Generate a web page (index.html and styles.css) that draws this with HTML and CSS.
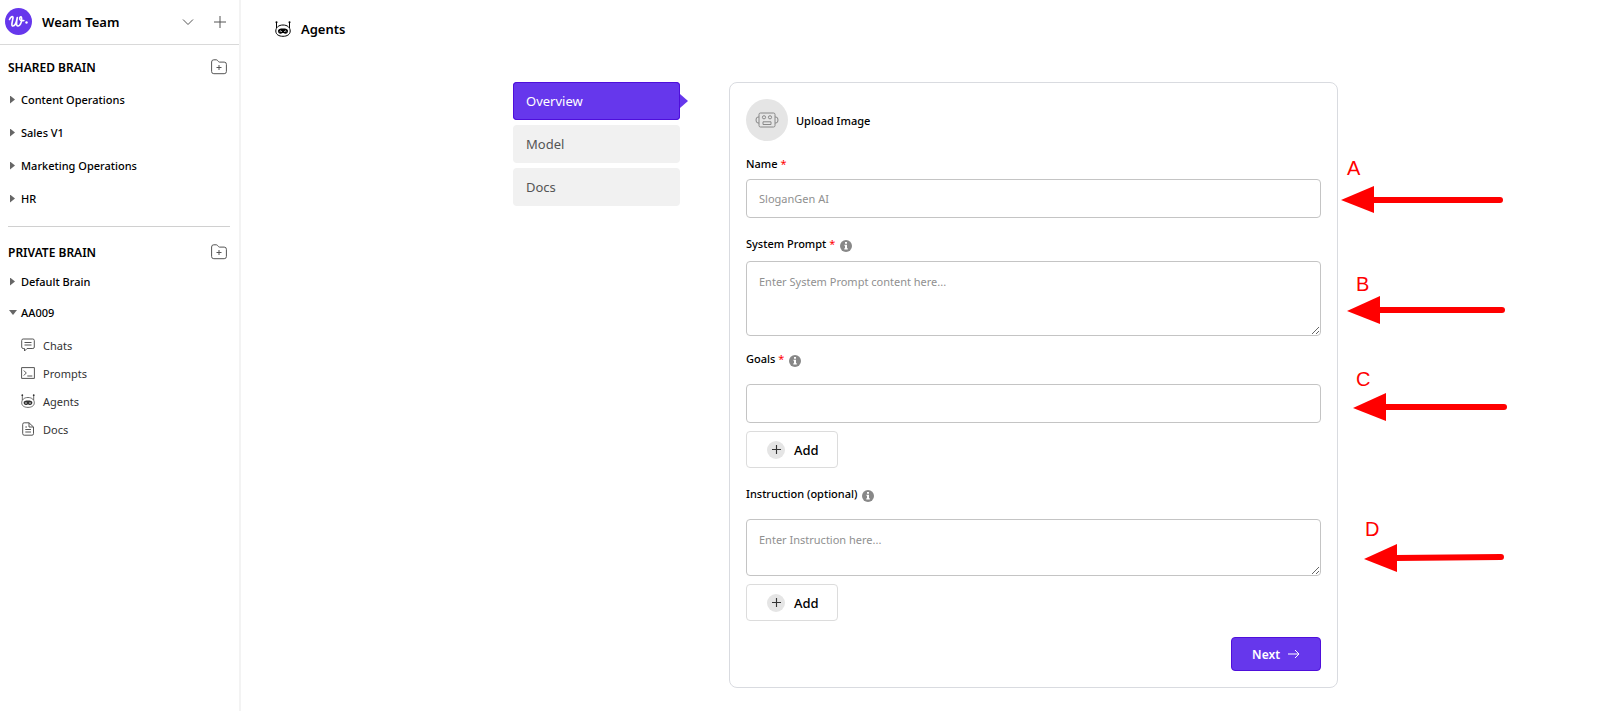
FILE: index.html
```html
<!DOCTYPE html>
<html lang="en">
<head>
    <meta charset="UTF-8">
    <title>Agents</title>
    <link rel="stylesheet" href="styles.css">
</head>
<body>
<!-- shared icons -->
<svg class="sprite" aria-hidden="true">
    <symbol id="folder" viewBox="0 0 16 16">
        <path d="M.6 12.500V3A2.200 2.200 0 0 1 2.800.8h2.500c.6 0 1 .3 1.400.8l.7.9c.3.4.7.6 1.100.6H13.200a2.200 2.200 0 0 1 2.200 2.200v7.200a2.200 2.200 0 0 1-2.200 2.200H2.800a2.200 2.200 0 0 1-2.200-2.200zM8 6v5M5.500 8.500h5"/>
    </symbol>
    <symbol id="agent" viewBox="0 0 16 16">
        <path d="M1.500 1v6M14.500 1v6M.8 10C.8 6.500 3.600 4 8 4s7.200 2.500 7.200 6-3 5.300-7.200 5.300S.8 13.500.8 10z"/>
        <circle class="solid" cx="1.500" cy="1.300" r="1"/>
        <circle class="solid" cx="14.500" cy="1.300" r="1"/>
        <path class="solid" d="M3 9.800C3 8 5.200 7.500 8 7.500s5 .5 5 2.300-1 2.900-2.500 2.900S8.800 12 8 12s-1 .7-2.500.7S3 11.600 3 9.800z"/>
        <path class="eyes" d="M4.700 10.600q1-1.300 2 0M9.300 10.600q1-1.300 2 0"/>
    </symbol>
    <symbol id="info" viewBox="0 0 12 12">
        <circle cx="6" cy="6" r="6"/>
        <path d="M5 2h2v1.700H5zM4.400 4.700H7v3.600h.8v1.100H4.300V8.300H5V5.800h-.6z" fill="#fff"/>
    </symbol>
    <symbol id="plus" viewBox="0 0 12 12">
        <path d="M6 0v12M0 6h12"/>
    </symbol>
</svg>

<div class="app">
    <aside class="sidebar">
        <div class="team">
            <svg class="logo" viewBox="0 0 27 27">
                <circle cx="13.500" cy="13.500" r="13.500" fill="#6637ec"/>
                <path d="M4.500 11.500C5.500 9 8 7.500 8 9.500c0 2.500-2.500 8.500 0 8.500 2.200 0 3.500-4 4.300-8.500-.8 4-1.400 8.500.6 8.500 2.600 0 4.600-6 3.600-8.500-.7-1.500-2.300-.2-1.700 1.800.5 1.400 2.200 1.700 4 1.200" fill="none" stroke="#fff" stroke-width="1.600" stroke-linecap="round" stroke-linejoin="round"/>
                <circle cx="21.500" cy="14.500" r="1.200" fill="#fff"/>
            </svg>
            <span class="team-name">Weam Team</span>
            <button class="icon-btn" aria-label="Switch team"><svg class="line" width="12" height="12" viewBox="0 0 12 12"><path d="M1 3.500l5 5 5-5"/></svg></button>
            <button class="icon-btn" aria-label="New chat"><svg class="line" width="12" height="12"><use href="#plus"/></svg></button>
        </div>

        <section class="brain shared">
            <div class="brain-head">
                <h2>SHARED BRAIN</h2>
                <button class="icon-btn" aria-label="Add shared brain"><svg class="line" width="16" height="16"><use href="#folder"/></svg></button>
            </div>
            <ul class="tree">
                <li><a href="#"><i class="caret"></i>Content Operations</a></li>
                <li><a href="#"><i class="caret"></i>Sales V1</a></li>
                <li><a href="#"><i class="caret"></i>Marketing Operations</a></li>
                <li><a href="#"><i class="caret"></i>HR</a></li>
            </ul>
        </section>

        <section class="brain private">
            <div class="brain-head">
                <h2>PRIVATE BRAIN</h2>
                <button class="icon-btn" aria-label="Add private brain"><svg class="line" width="16" height="16"><use href="#folder"/></svg></button>
            </div>
            <ul class="tree">
                <li><a href="#"><i class="caret"></i>Default Brain</a></li>
                <li><a href="#"><i class="caret open"></i>AA009</a></li>
            </ul>
            <ul class="pages">
                <li><a href="#"><svg class="line" width="14" height="14" viewBox="0 0 14 14"><path d="M2.200 1h9.600A1.500 1.500 0 0 1 13.300 2.500v6.500a1.500 1.500 0 0 1-1.500 1.500H6L3.500 13v-2.500H2.200A1.500 1.500 0 0 1 .7 9V2.500A1.500 1.500 0 0 1 2.200 1zM3.500 4.500h7M3.500 7h7"/></svg>Chats</a></li>
                <li><a href="#"><svg class="line" width="14" height="14" viewBox="0 0 14 14"><path d="M.6 1.600h12.800v10.800H.6zM2.800 4.500L5.300 7 2.800 9.500M6.300 10h5"/></svg>Prompts</a></li>
                <li><a href="#"><svg class="line" width="14" height="14"><use href="#agent"/></svg>Agents</a></li>
                <li><a href="#"><svg class="line" width="14" height="14" viewBox="0 0 14 14"><path d="M3.200.8H8L12.500 5v6.700a1.500 1.500 0 0 1-1.500 1.500H3.200A1.500 1.500 0 0 1 1.700 11.700V2.300A1.500 1.500 0 0 1 3.200.8zM8 .8V5h4.500M4.300 7.500H10M4.300 10H10M4.300 5H6"/></svg>Docs</a></li>
            </ul>
        </section>
    </aside>

    <main class="main">
        <header class="page-head">
            <svg class="line" width="16" height="16"><use href="#agent"/></svg>
            <h1>Agents</h1>
        </header>

        <div class="layout">
            <nav class="tabs">
                <a class="active" href="#">Overview</a>
                <a href="#">Model</a>
                <a href="#">Docs</a>
            </nav>

            <form class="card">
                <button type="button" class="upload">
                    <span class="avatar">
                        <svg class="line" width="24" height="16" viewBox="0 0 24 16"><path d="M5.500 1h13A1.500 1.500 0 0 1 20 2.500v11a1.500 1.500 0 0 1-1.500 1.500h-13A1.500 1.500 0 0 1 4 13.500v-11A1.500 1.500 0 0 1 5.500 1zM4 5H3Q1 5 1 8t2 3h1M20 5h1q2 0 2 3t-2 3h-1M8 9.800h8v2.700H8z"/><circle cx="9" cy="5.300" r="1.600"/><circle cx="15" cy="5.300" r="1.600"/></svg>
                    </span>
                    Upload Image
                </button>

                <div class="field">
                    <label for="name">Name <b>*</b></label>
                    <input id="name" type="text" placeholder="SloganGen AI">
                </div>

                <div class="field long">
                    <label for="prompt">System Prompt <b>*</b> <svg class="info"><use href="#info"/></svg></label>
                    <textarea id="prompt" class="tall" placeholder="Enter System Prompt content here..."></textarea>
                </div>

                <div class="field spaced">
                    <label for="goals">Goals <b>*</b> <svg class="info"><use href="#info"/></svg></label>
                    <input id="goals" type="text">
                    <button type="button" class="add"><span><svg class="line" width="9" height="9"><use href="#plus"/></svg></span>Add</button>
                </div>

                <div class="field long spaced">
                    <label for="instruction">Instruction (optional) <svg class="info"><use href="#info"/></svg></label>
                    <textarea id="instruction" placeholder="Enter Instruction here..."></textarea>
                    <button type="button" class="add"><span><svg class="line" width="9" height="9"><use href="#plus"/></svg></span>Add</button>
                </div>

                <button type="button" class="next">Next <svg width="12" height="10" viewBox="0 0 12 10"><path d="M0 5h11M7 1l4 4-4 4"/></svg></button>

                <!-- callouts beside the form -->
                <svg class="callouts" width="180" height="500" viewBox="0 0 180 500">
                    <text x="10" y="92">A</text>
                    <path class="head" d="M4 117l33-14v27z"/>
                    <path d="M35 117h128"/>
                    <text x="19" y="208">B</text>
                    <path class="head" d="M10 228l33-15v28z"/>
                    <path d="M41 227h124"/>
                    <text x="19" y="303">C</text>
                    <path class="head" d="M16 325l33-15v28z"/>
                    <path d="M47 324h120"/>
                    <text x="28" y="453">D</text>
                    <path class="head" d="M27 476l33-15v28z"/>
                    <path d="M58 475l106-1"/>
                </svg>
            </form>
        </div>
    </main>
</div>
</body>
</html>
```
FILE: styles.css
```css
* {
    margin: 0;
    padding: 0;
    box-sizing: border-box;
}

body {
    font-family: "Noto Sans", "Open Sans", sans-serif;
    font-size: 11px;
    color: #000;
    background: #fff;
}

ul {
    list-style: none;
}

a {
    color: inherit;
    text-decoration: none;
}

button {
    font: inherit;
    color: inherit;
    background: none;
    border: 0;
    cursor: pointer;
}

.sprite {
    display: none;
}

.line {
    fill: none;
    stroke: #555;
    flex: none;
}

.solid {
    fill: currentColor;
    stroke: none;
}

.eyes {
    stroke: #fff;
}

.app {
    display: flex;
    min-height: 100vh;
}

/* sidebar */
.sidebar {
    width: 241px;
    flex: none;
    border-right: 2px solid #f3f3f3;
}

.team {
    display: flex;
    align-items: center;
    height: 45px;
    padding: 0 13px 1px 5px;
    border-bottom: 1px solid #d9d9d9;
}

.logo {
    width: 27px;
    height: 27px;
    margin-right: 10px;
}

.team-name {
    flex: 1;
    font-size: 13px;
    font-weight: 600;
}

.icon-btn {
    display: flex;
}

.team .icon-btn {
    margin-left: 20px;
}

.brain-head {
    display: flex;
    align-items: center;
    justify-content: space-between;
    height: 24px;
    padding: 0 12px 0 8px;
}

h2 {
    font-size: 12px;
    font-weight: 600;
}

.shared {
    padding: 10px 0 8px;
}

.private {
    padding-top: 13px;
}

.private::before {
    content: "";
    display: block;
    margin: -13px 9px 13px 8px;
    border-top: 1px solid #d0d0d0;
}

.tree a {
    display: flex;
    align-items: center;
    height: 33px;
    padding-left: 10px;
    font-weight: 500;
}

.shared .tree {
    padding: 4px 0 3px;
}

.private .tree {
    padding: 2px 0 3px;
}

.private .tree a {
    height: 31px;
}

.caret {
    width: 11px;
    flex: none;
}

.caret::before {
    content: "";
    display: block;
    width: 5px;
    height: 8px;
    background: #666;
    clip-path: polygon(0 0, 100% 50%, 0 100%);
}

.caret.open::before {
    width: 8px;
    height: 5px;
    margin-left: -1px;
    clip-path: polygon(0 0, 100% 0, 50% 100%);
}

.pages a {
    display: flex;
    align-items: center;
    gap: 8px;
    height: 28px;
    padding-left: 21px;
    color: #333;
}

/* main area */
.main {
    flex: 1;
    padding: 0 24px 0 34px;
}

.page-head {
    display: flex;
    align-items: center;
    gap: 10px;
    height: 58px;
}

.page-head .line {
    stroke: #000;
}

h1 {
    font-size: 13px;
    font-weight: 600;
}

.layout {
    display: flex;
    align-items: flex-start;
    gap: 49px;
    max-width: 825px;
    margin: 24px auto 0;
}

.tabs {
    display: flex;
    flex-direction: column;
    gap: 5px;
    width: 167px;
}

.tabs a {
    position: relative;
    height: 38px;
    padding-left: 13px;
    font-size: 13px;
    line-height: 38px;
    color: #555;
    background: #f1f1f1;
    border-radius: 4px;
}

.tabs .active {
    color: #fff;
    background: #6637ec;
    box-shadow: inset 0 0 0 1px #4f0fdb;
}

.tabs .active::after {
    content: "";
    position: absolute;
    left: 100%;
    top: 12px;
    border: 7px solid transparent;
    border-left: 8px solid #6637ec;
    border-right: 0;
}

.card {
    position: relative;
    display: flex;
    flex-direction: column;
    align-items: flex-start;
    flex: 1;
    padding: 16px;
    border: 1px solid #d9dbe0;
    border-radius: 8px;
}

.upload {
    display: flex;
    align-items: center;
    gap: 8px;
    font-weight: 500;
}

.avatar {
    display: flex;
    align-items: center;
    justify-content: center;
    width: 42px;
    height: 42px;
    border-radius: 50%;
    background: #e5e5e5;
}

.avatar .line {
    stroke: #888;
}

.field {
    display: flex;
    flex-direction: column;
    align-items: flex-start;
    width: 100%;
    padding-top: 14px;
}

.field.long {
    padding-top: 17px;
}

.field label {
    height: 18px;
    margin-bottom: 6px;
    font-weight: 500;
    line-height: 18px;
}

.field.long label {
    margin-bottom: 8px;
}

.field.spaced label {
    margin-bottom: 16px;
}

.field b {
    color: #f00;
    font-weight: 400;
}

.info {
    width: 12px;
    height: 12px;
    margin-left: 2px;
    vertical-align: -4px;
    fill: #888;
}

input,
textarea {
    display: block;
    width: 100%;
    height: 39px;
    padding: 0 12px;
    font: inherit;
    border: 1px solid #c4c4c4;
    border-radius: 4px;
    outline: 0;
}

textarea {
    height: 57px;
    padding-top: 12px;
    resize: vertical;
}

.tall {
    height: 75px;
}

::placeholder {
    color: #909090;
}

.add {
    display: flex;
    align-items: center;
    gap: 9px;
    height: 37px;
    margin-top: 8px;
    padding: 0 18px 0 20px;
    font-size: 13px;
    font-weight: 500;
    border: 1px solid #dcdcdc;
    border-radius: 4px;
}

.add span {
    display: flex;
    align-items: center;
    justify-content: center;
    width: 18px;
    height: 18px;
    border-radius: 50%;
    background: #e5e5e5;
}

.add .line {
    stroke: #333;
    stroke-width: 1.5px;
}

.next {
    display: flex;
    align-items: center;
    gap: 8px;
    align-self: flex-end;
    height: 34px;
    margin-top: 16px;
    padding: 0 20px;
    font-size: 12px;
    font-weight: 600;
    color: #fff;
    background: #6637ec;
    border: 1px solid #4f0fdb;
    border-radius: 4px;
}

.next svg {
    fill: none;
    stroke: #fff;
}

.callouts {
    position: absolute;
    left: 100%;
    top: 0;
    fill: none;
    stroke: #f00;
    stroke-width: 6px;
    stroke-linecap: round;
}

.callouts text {
    font: 20px "Liberation Sans", Arial, sans-serif;
    fill: #f00;
    stroke: none;
}

.callouts .head {
    fill: #f00;
    stroke: none;
}
```
